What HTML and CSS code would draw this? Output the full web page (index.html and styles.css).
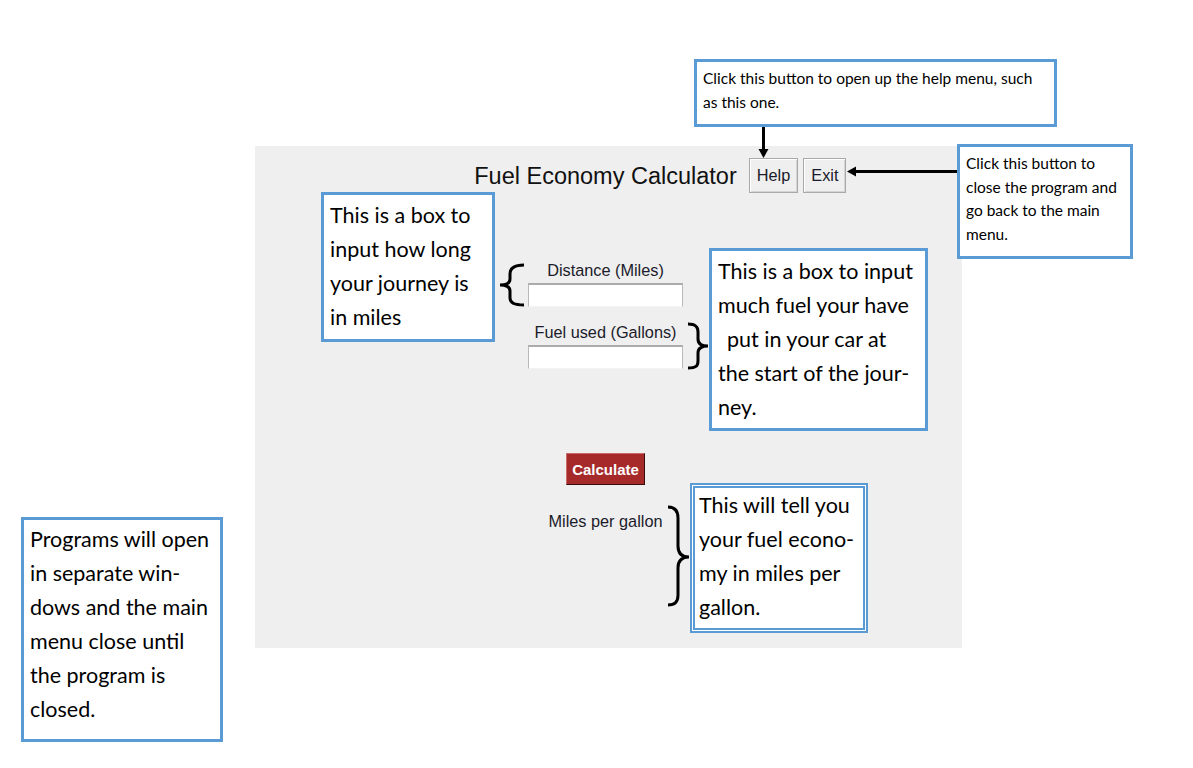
FILE: index.html
```html
<!DOCTYPE html>
<html lang="en">
<head>
<meta charset="utf-8">
<title>Fuel Economy Calculator - Help</title>
<link rel="stylesheet" href="styles.css">
</head>
<body>
<div class="page">
  <section class="app">
    <header class="app-head">
      <h1 class="app-title">Fuel Economy Calculator</h1>
      <div class="head-btns">
        <button class="tk-btn" type="button">Help</button>
        <button class="tk-btn" type="button">Exit</button>
      </div>
    </header>
    <div class="form">
      <label class="field-label" for="dist">Distance (Miles)</label>
      <input class="field" id="dist" type="text">
      <label class="field-label label-fuel" for="fuel">Fuel used (Gallons)</label>
      <input class="field" id="fuel" type="text">
      <button class="calc-btn" type="button">Calculate</button>
      <div class="result-label">Miles per gallon</div>
    </div>
  </section>

  <div class="note note-sm note-help">Click this button to open up the help menu, such<br>as this one.</div>
  <div class="note note-sm note-exit">Click this button to<br>close the program and<br>go back to the main<br>menu.</div>
  <div class="note note-lg note-dist">This is a box to<br>input how long<br>your journey is<br>in miles</div>
  <div class="note note-lg note-fuel">This is a box to input<br>much fuel your have<br><span class="indent">put in your car at</span><br>the start of the jour-<br>ney.</div>
  <div class="note note-lg note-result">This will tell you<br>your fuel econo-<br>my in miles per<br>gallon.</div>
  <div class="note note-lg note-programs">Programs will open<br>in separate win-<br>dows and the main<br>menu close until<br>the program is<br>closed.</div>

  <svg class="marks" width="1193" height="768" viewBox="0 0 1193 768" aria-hidden="true">
    <g fill="none" stroke="#000" stroke-width="3" stroke-linecap="butt">
      <line x1="763.5" y1="127" x2="763.5" y2="150"/>
      <line x1="957" y1="171.5" x2="854" y2="171.5"/>
      <path d="M524,265 C514,265 510,268 510,274 L510,279 C510,283 506,285 500,285 C506,285 510,287 510,291 L510,298 C510,303 514,305 524,305"/>
      <path d="M688,324 C696,324 698,327 698,332 L698,339 C698,343 701,346 708,346 C701,346 698,349 698,353 L698,361 C698,366 696,368 688,368"/>
      <path d="M668,507 C675,507 678,511 678,518 L678,546 C678,553 681,557 689,557 C681,557 678,561 678,568 L678,595 C678,602 675,605 668,605"/>
    </g>
    <g fill="#000">
      <polygon points="758.5,149 768.5,149 763.5,158"/>
      <polygon points="856,166.5 856,176.5 847,171.5"/>
    </g>
  </svg>
</div>
</body>
</html>
```

FILE: styles.css
```css
* {
  box-sizing: border-box;
}

html, body {
  margin: 0;
  padding: 0;
  background: #ffffff;
}

.page {
  position: relative;
  width: 1193px;
  height: 768px;
  overflow: hidden;
  background: #ffffff;
}

/* ---------- application window ---------- */
.app {
  margin: 146px 0 0 255px;
  width: 707px;
  height: 502px;
  padding: 12px 6px 0 0;
  background: #efefef;
  font-family: "Liberation Sans", Arial, sans-serif;
  color: #1b1b2b;
}

.app-head {
  display: grid;
  grid-template-columns: 1fr auto 1fr;
  align-items: center;
  height: 35px;
}

.app-title {
  grid-column: 2;
  margin: 0;
  padding-top: 2px;
  font-size: 23.5px;
  font-weight: normal;
  line-height: 1;
  color: #111111;
}

.head-btns {
  grid-column: 3;
  display: flex;
  gap: 5px;
  margin-left: 12px;
  height: 35px;
}

.tk-btn {
  height: 35px;
  padding: 0 7px;
  font-family: "Liberation Sans", Arial, sans-serif;
  font-size: 16.3px;
  color: #1b1b2b;
  background: #efefef;
  border: 1px solid #a9a9a9;
  box-shadow: inset 1px 1px 0 #ffffff, inset -1px -1px 0 #d4d4d4;
}

.form {
  display: flex;
  flex-direction: column;
  align-items: center;
  margin-top: 68px;
}

.field-label {
  display: block;
  font-size: 16.3px;
  line-height: 18px;
  margin-bottom: 4px;
  color: #1b1b2b;
}

.label-fuel {
  margin-top: 16px;
}

.field {
  display: block;
  width: 155px;
  height: 24px;
  margin: 0;
  padding: 0 3px;
  background: #ffffff;
  border-style: solid;
  border-width: 2px 1px 1px 1px;
  border-color: #ababab #b9b9b9 #f4f4f4 #b9b9b9;
}

.calc-btn {
  margin-top: 84px;
  width: 79px;
  height: 32px;
  padding: 0;
  font-family: "Liberation Sans", Arial, sans-serif;
  font-size: 15px;
  font-weight: bold;
  color: #ffffff;
  background: #a62a2a;
  border: 1px solid;
  border-color: #c86a6a #3b0c0c #3b0c0c #c86a6a;
}

.result-label {
  margin-top: 27px;
  font-size: 16.3px;
  line-height: 18px;
  color: #1b1b2b;
}

/* ---------- annotation callouts ---------- */
.note {
  position: absolute;
  background: #ffffff;
  border: 3px solid #5b9bd5;
  font-family: Lato, "Open Sans", sans-serif;
  color: #000000;
  white-space: nowrap;
}

.note-sm {
  font-size: 15.5px;
  line-height: 23.5px;
  padding: 5px 0 0 6px;
}

.note-lg {
  font-size: 21.5px;
  line-height: 34px;
  padding: 3px 0 0 6px;
}

.note-help {
  left: 694px;
  top: 59px;
  width: 363px;
  height: 68px;
}

.note-exit {
  left: 957px;
  top: 144px;
  width: 176px;
  height: 115px;
}

.note-dist {
  left: 321px;
  top: 192px;
  width: 174px;
  height: 150px;
}

.note-fuel {
  left: 709px;
  top: 248px;
  width: 219px;
  height: 183px;
}

.indent {
  padding-left: 9px;
}

.note-result {
  left: 690px;
  top: 483px;
  width: 178px;
  height: 150px;
  border: 5px double #5b9bd5;
  padding: 0 0 0 4px;
}

.note-programs {
  left: 21px;
  top: 517px;
  width: 202px;
  height: 225px;
  padding: 2px 0 0 6px;
}

/* ---------- arrows and braces ---------- */
.marks {
  position: absolute;
  left: 0;
  top: 0;
  pointer-events: none;
}
```
